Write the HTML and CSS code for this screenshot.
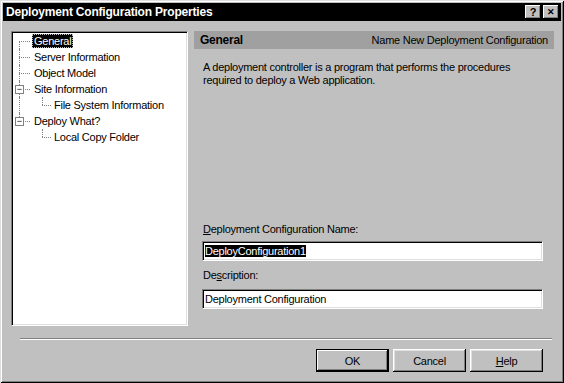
FILE: index.html
```html
<!DOCTYPE html>
<html lang="en">
<head>
    <meta charset="UTF-8">
    <title>Deployment Configuration Properties</title>
    <link rel="stylesheet" href="styles.css">
</head>
<body>
    <div class="window">
        <!-- Barra de título -->
        <div class="titlebar">
            <span class="title">Deployment Configuration Properties</span>
            <div class="caption-buttons">
                <span class="cap-btn">?</span>
                <span class="cap-btn close">&#x2715;</span>
            </div>
        </div>

        <div class="main">
            <!-- Árvore de páginas -->
            <div class="tree">
                <div class="row">
                    <span class="cell first"></span>
                    <span class="label selected">General</span>
                </div>
                <div class="row">
                    <span class="cell tee"></span>
                    <span class="label">Server Information</span>
                </div>
                <div class="row">
                    <span class="cell tee"></span>
                    <span class="label">Object Model</span>
                </div>
                <div class="row">
                    <span class="cell tee"><span class="expander">&minus;</span></span>
                    <span class="label">Site Information</span>
                </div>
                <div class="row">
                    <span class="indent vert"></span>
                    <span class="cell ell short"></span>
                    <span class="label">File System Information</span>
                </div>
                <div class="row">
                    <span class="cell ell"><span class="expander">&minus;</span></span>
                    <span class="label">Deploy What?</span>
                </div>
                <div class="row">
                    <span class="indent"></span>
                    <span class="cell ell short"></span>
                    <span class="label">Local Copy Folder</span>
                </div>
            </div>

            <!-- Página General -->
            <div class="page">
                <div class="page-header">
                    <span class="page-title">General</span>
                    <span class="page-subtitle">Name New Deployment Configuration</span>
                </div>
                <p class="description">
                    A deployment controller is a program that performs the procedures<br>
                    required to deploy a Web application.
                </p>
                <div class="form">
                    <label class="field-label"><u>D</u>eployment Configuration Name:</label>
                    <div class="field"><span class="text-selected">DeployConfiguration1</span></div>
                    <label class="field-label second">De<u>s</u>cription:</label>
                    <div class="field">Deployment Configuration</div>
                </div>
            </div>
        </div>

        <div class="separator"></div>

        <div class="dialog-buttons">
            <button class="btn default">OK</button>
            <button class="btn">Cancel</button>
            <button class="btn"><u>H</u>elp</button>
        </div>
    </div>
</body>
</html>
```

FILE: styles.css
```css
body {
    margin: 0;
    padding: 0;
    background-color: #c0c0c0;
    font-family: 'Liberation Sans', Arial, sans-serif;
    font-size: 11px;
    letter-spacing: -0.25px;
    color: #000;
}

.window {
    width: 564px;
    height: 383px;
    box-sizing: border-box;
    padding: 3px;
    background-color: #c0c0c0;
    box-shadow: inset 1px 1px #dfdfdf, inset -1px -1px #000,
                inset 2px 2px #fff, inset -2px -2px #808080;
}

/* Barra de título */
.titlebar {
    height: 18px;
    background-color: #000;
    display: flex;
    align-items: center;
    justify-content: space-between;
    padding: 0 2px 0 3px;
}

.title {
    color: #fff;
    font-weight: bold;
    font-size: 12px;
    letter-spacing: -0.2px;
}

.caption-buttons {
    display: flex;
    gap: 2px;
}

.cap-btn {
    width: 16px;
    height: 14px;
    box-sizing: border-box;
    background-color: #c0c0c0;
    box-shadow: inset -1px -1px #000, inset 1px 1px #fff,
                inset -2px -2px #808080;
    display: flex;
    align-items: center;
    justify-content: center;
    font-weight: bold;
    font-size: 11px;
    letter-spacing: 0;
    line-height: 1;
}

.cap-btn.close {
    font-size: 9px;
}

/* Área principal */
.main {
    display: flex;
    padding: 10px 0 0 8px;
}

.tree {
    width: 177px;
    height: 295px;
    box-sizing: border-box;
    background-color: #fff;
    border-top: 1px solid #808080;
    border-left: 1px solid #808080;
    border-right: 1px solid #fff;
    border-bottom: 1px solid #fff;
    box-shadow: inset 1px 1px #000, inset -1px -1px #dfdfdf;
    padding: 1px 0 0 1px;
}

.row {
    display: flex;
    align-items: center;
    height: 16px;
}

.cell,
.indent {
    position: relative;
    height: 16px;
    flex: none;
}

.cell {
    width: 19px;
}

.cell.short {
    width: 16px;
}

.indent {
    width: 23px;
}

/* linhas pontilhadas da árvore */
.cell::before {
    content: '';
    position: absolute;
    left: 6px;
    top: 8px;
    width: 11px;
    border-top: 1px dotted #808080;
}

.cell.short::before {
    width: 9px;
}

.cell::after,
.indent.vert::after {
    content: '';
    position: absolute;
    left: 6px;
    border-left: 1px dotted #808080;
}

.cell.first::after {
    top: 8px;
    bottom: 0;
}

.cell.tee::after,
.indent.vert::after {
    top: 0;
    bottom: 0;
}

.cell.ell::after {
    top: 0;
    height: 8px;
}

.expander {
    position: absolute;
    left: 2px;
    top: 4px;
    width: 9px;
    height: 9px;
    box-sizing: border-box;
    border: 1px solid #808080;
    background-color: #fff;
    z-index: 1;
    font-size: 9px;
    letter-spacing: 0;
    line-height: 6px;
    text-align: center;
}

.label {
    padding: 0 2px;
    line-height: 14px;
    white-space: nowrap;
}

.label.selected {
    background-color: #000;
    color: #fff;
    outline: 1px dotted #c0c0c0;
    outline-offset: -1px;
}

/* Página à direita */
.page {
    width: 360px;
    height: 295px;
    margin-left: 6px;
    display: flex;
    flex-direction: column;
}

.page-header {
    height: 18px;
    background-color: #a0a0a0;
    display: flex;
    align-items: center;
    justify-content: space-between;
    padding: 0 6px;
}

.page-title {
    font-weight: bold;
    font-size: 12px;
}

.description {
    margin: 12px 0 0 9px;
    line-height: 13px;
}

.form {
    margin-top: auto;
    padding: 0 0 17px 8px;
    display: flex;
    flex-direction: column;
}

.field-label {
    line-height: 13px;
    margin: 0 0 5px 1px;
}

.field-label.second {
    margin-top: 8px;
    margin-bottom: 7px;
}

.field {
    width: 341px;
    height: 20px;
    box-sizing: border-box;
    background-color: #fff;
    border-top: 1px solid #808080;
    border-left: 1px solid #808080;
    border-right: 1px solid #fff;
    border-bottom: 1px solid #fff;
    box-shadow: inset 1px 1px #000, inset -1px -1px #dfdfdf;
    padding: 0 2px;
    line-height: 18px;
}

.text-selected {
    background-color: #000;
    color: #fff;
}

/* Rodapé */
.separator {
    margin: 12px 0 0 17px;
    width: 532px;
    height: 1px;
    border-bottom: 1px solid #fff;
    background-color: #808080;
}

.dialog-buttons {
    display: flex;
    justify-content: flex-end;
    gap: 4px;
    padding-right: 18px;
    margin-top: 9px;
}

.btn {
    width: 73px;
    height: 23px;
    box-sizing: border-box;
    background-color: #c0c0c0;
    border: none;
    padding: 0;
    font-family: 'Liberation Sans', Arial, sans-serif;
    font-size: 11px;
    letter-spacing: -0.25px;
    color: #000;
    box-shadow: inset -1px -1px #000, inset 1px 1px #fff,
                inset -2px -2px #808080, inset 2px 2px #dfdfdf;
}

.btn.default {
    box-shadow: inset 0 0 0 1px #000, inset -2px -2px #000,
                inset 2px 2px #fff, inset -3px -3px #808080;
}
```
